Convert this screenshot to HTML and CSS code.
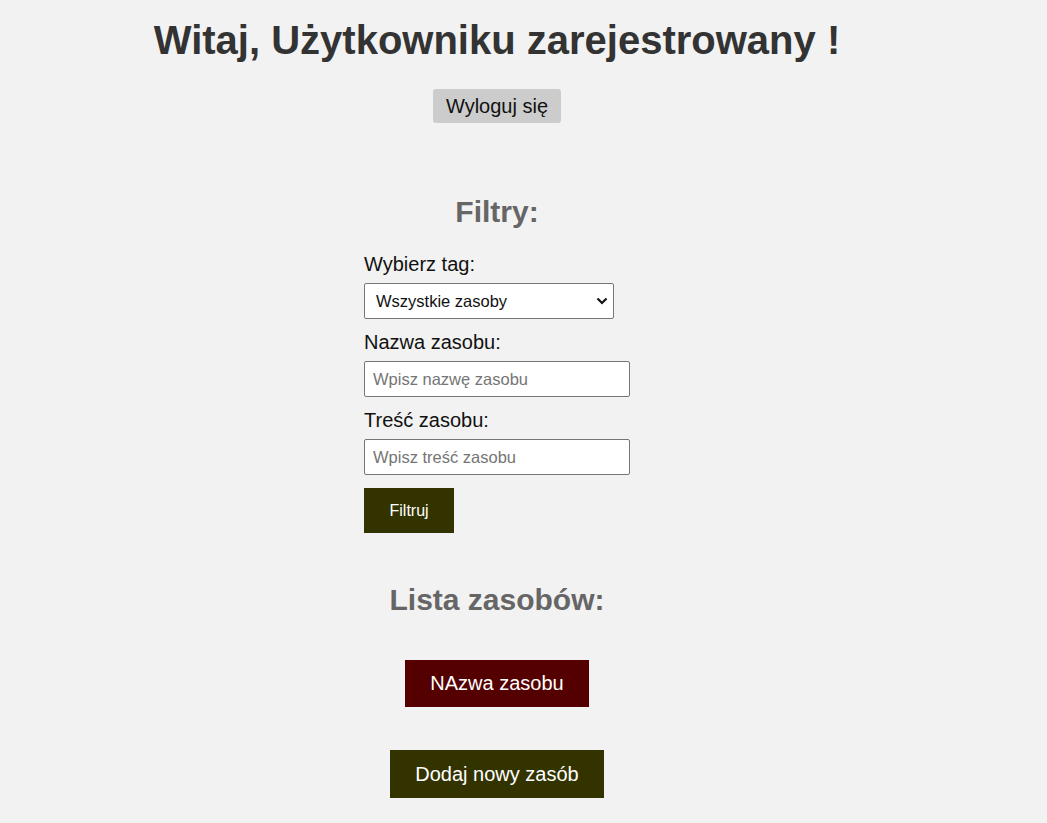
FILE: index.html
```html
<!DOCTYPE html>
<html lang="pl">
<head>
<meta charset="utf-8">
<title>Zasoby</title>
<link rel="stylesheet" href="styles.css">
</head>
<body>
<main class="page">
  <h1 class="title">Witaj, Użytkowniku zarejestrowany !</h1>
  <button class="btn-logout" type="button">Wyloguj się</button>

  <h2 class="section-title filters-title">Filtry:</h2>
  <form class="filters">
    <label class="field-label" for="tag">Wybierz tag:</label>
    <span class="select-wrap">
      <select id="tag" class="field select">
        <option>Wszystkie zasoby</option>
      </select>
      <svg class="chevron" width="12" height="8" viewBox="0 0 12 8" aria-hidden="true"><path d="M1.5 1.5 L6 6 L10.5 1.5" fill="none" stroke="#111" stroke-width="2.2"/></svg>
    </span>
    <label class="field-label" for="name">Nazwa zasobu:</label>
    <input id="name" class="field input" type="text" placeholder="Wpisz nazwę zasobu">
    <label class="field-label" for="content">Treść zasobu:</label>
    <input id="content" class="field input" type="text" placeholder="Wpisz treść zasobu">
    <button class="btn-filter" type="button">Filtruj</button>
  </form>

  <h2 class="section-title list-title">Lista zasobów:</h2>
  <button class="btn-resource" type="button">NAzwa zasobu</button>
  <button class="btn-add" type="button">Dodaj nowy zasób</button>
</main>
</body>
</html>
```

FILE: styles.css
```css
html, body {
  margin: 0;
  padding: 0;
  background: #f2f2f2;
}

body {
  font-family: "Liberation Sans", Arial, sans-serif;
  color: #111;
}

.page {
  width: 994px;
  display: flex;
  flex-direction: column;
  align-items: center;
  padding-top: 17px;
}

.title {
  margin: 0;
  font-size: 40px;
  line-height: 46px;
  font-weight: bold;
  color: #333;
}

.btn-logout {
  margin-top: 26px;
  font-family: inherit;
  font-size: 20px;
  line-height: 22px;
  padding: 6px 13px;
  border: none;
  border-radius: 3px;
  background: #cccccc;
  color: #111;
}

.section-title {
  margin: 0;
  font-size: 30px;
  line-height: 34px;
  font-weight: bold;
  color: #666;
}

.filters-title {
  margin-top: 72px;
}

.filters {
  width: 266px;
  margin-top: 24px;
  display: flex;
  flex-direction: column;
  align-items: flex-start;
}

.field-label {
  display: block;
  font-size: 20px;
  line-height: 23px;
  margin-bottom: 7px;
  color: #111;
}

.select-wrap {
  position: relative;
  display: block;
  margin-bottom: 12px;
}

.field {
  box-sizing: border-box;
  height: 36px;
  font-family: inherit;
  font-size: 16.5px;
  border: 1px solid #767676;
  border-radius: 2px;
  background: #fff;
  color: #111;
  margin: 0;
}

.select {
  width: 250px;
  padding: 0 30px 0 11px;
  appearance: none;
  -webkit-appearance: none;
  display: block;
}

.chevron {
  position: absolute;
  left: 232px;
  top: 14px;
  pointer-events: none;
}

.input {
  width: 266px;
  padding: 0 8px;
  margin-bottom: 12px;
}

.input::placeholder {
  color: #757575;
}

.btn-filter {
  margin-top: 1px;
  font-family: inherit;
  font-size: 16px;
  line-height: 19px;
  padding: 13px 25.5px;
  border: none;
  background: #333300;
  color: #fff;
}

.list-title {
  margin-top: 50px;
}

.btn-resource {
  margin-top: 43px;
  font-family: inherit;
  font-size: 20px;
  line-height: 23px;
  padding: 12px 25px;
  border: none;
  background: #550000;
  color: #fff;
}

.btn-add {
  margin-top: 43px;
  font-family: inherit;
  font-size: 20px;
  line-height: 24px;
  padding: 12px 25px;
  border: none;
  background: #333300;
  color: #fff;
}
```
